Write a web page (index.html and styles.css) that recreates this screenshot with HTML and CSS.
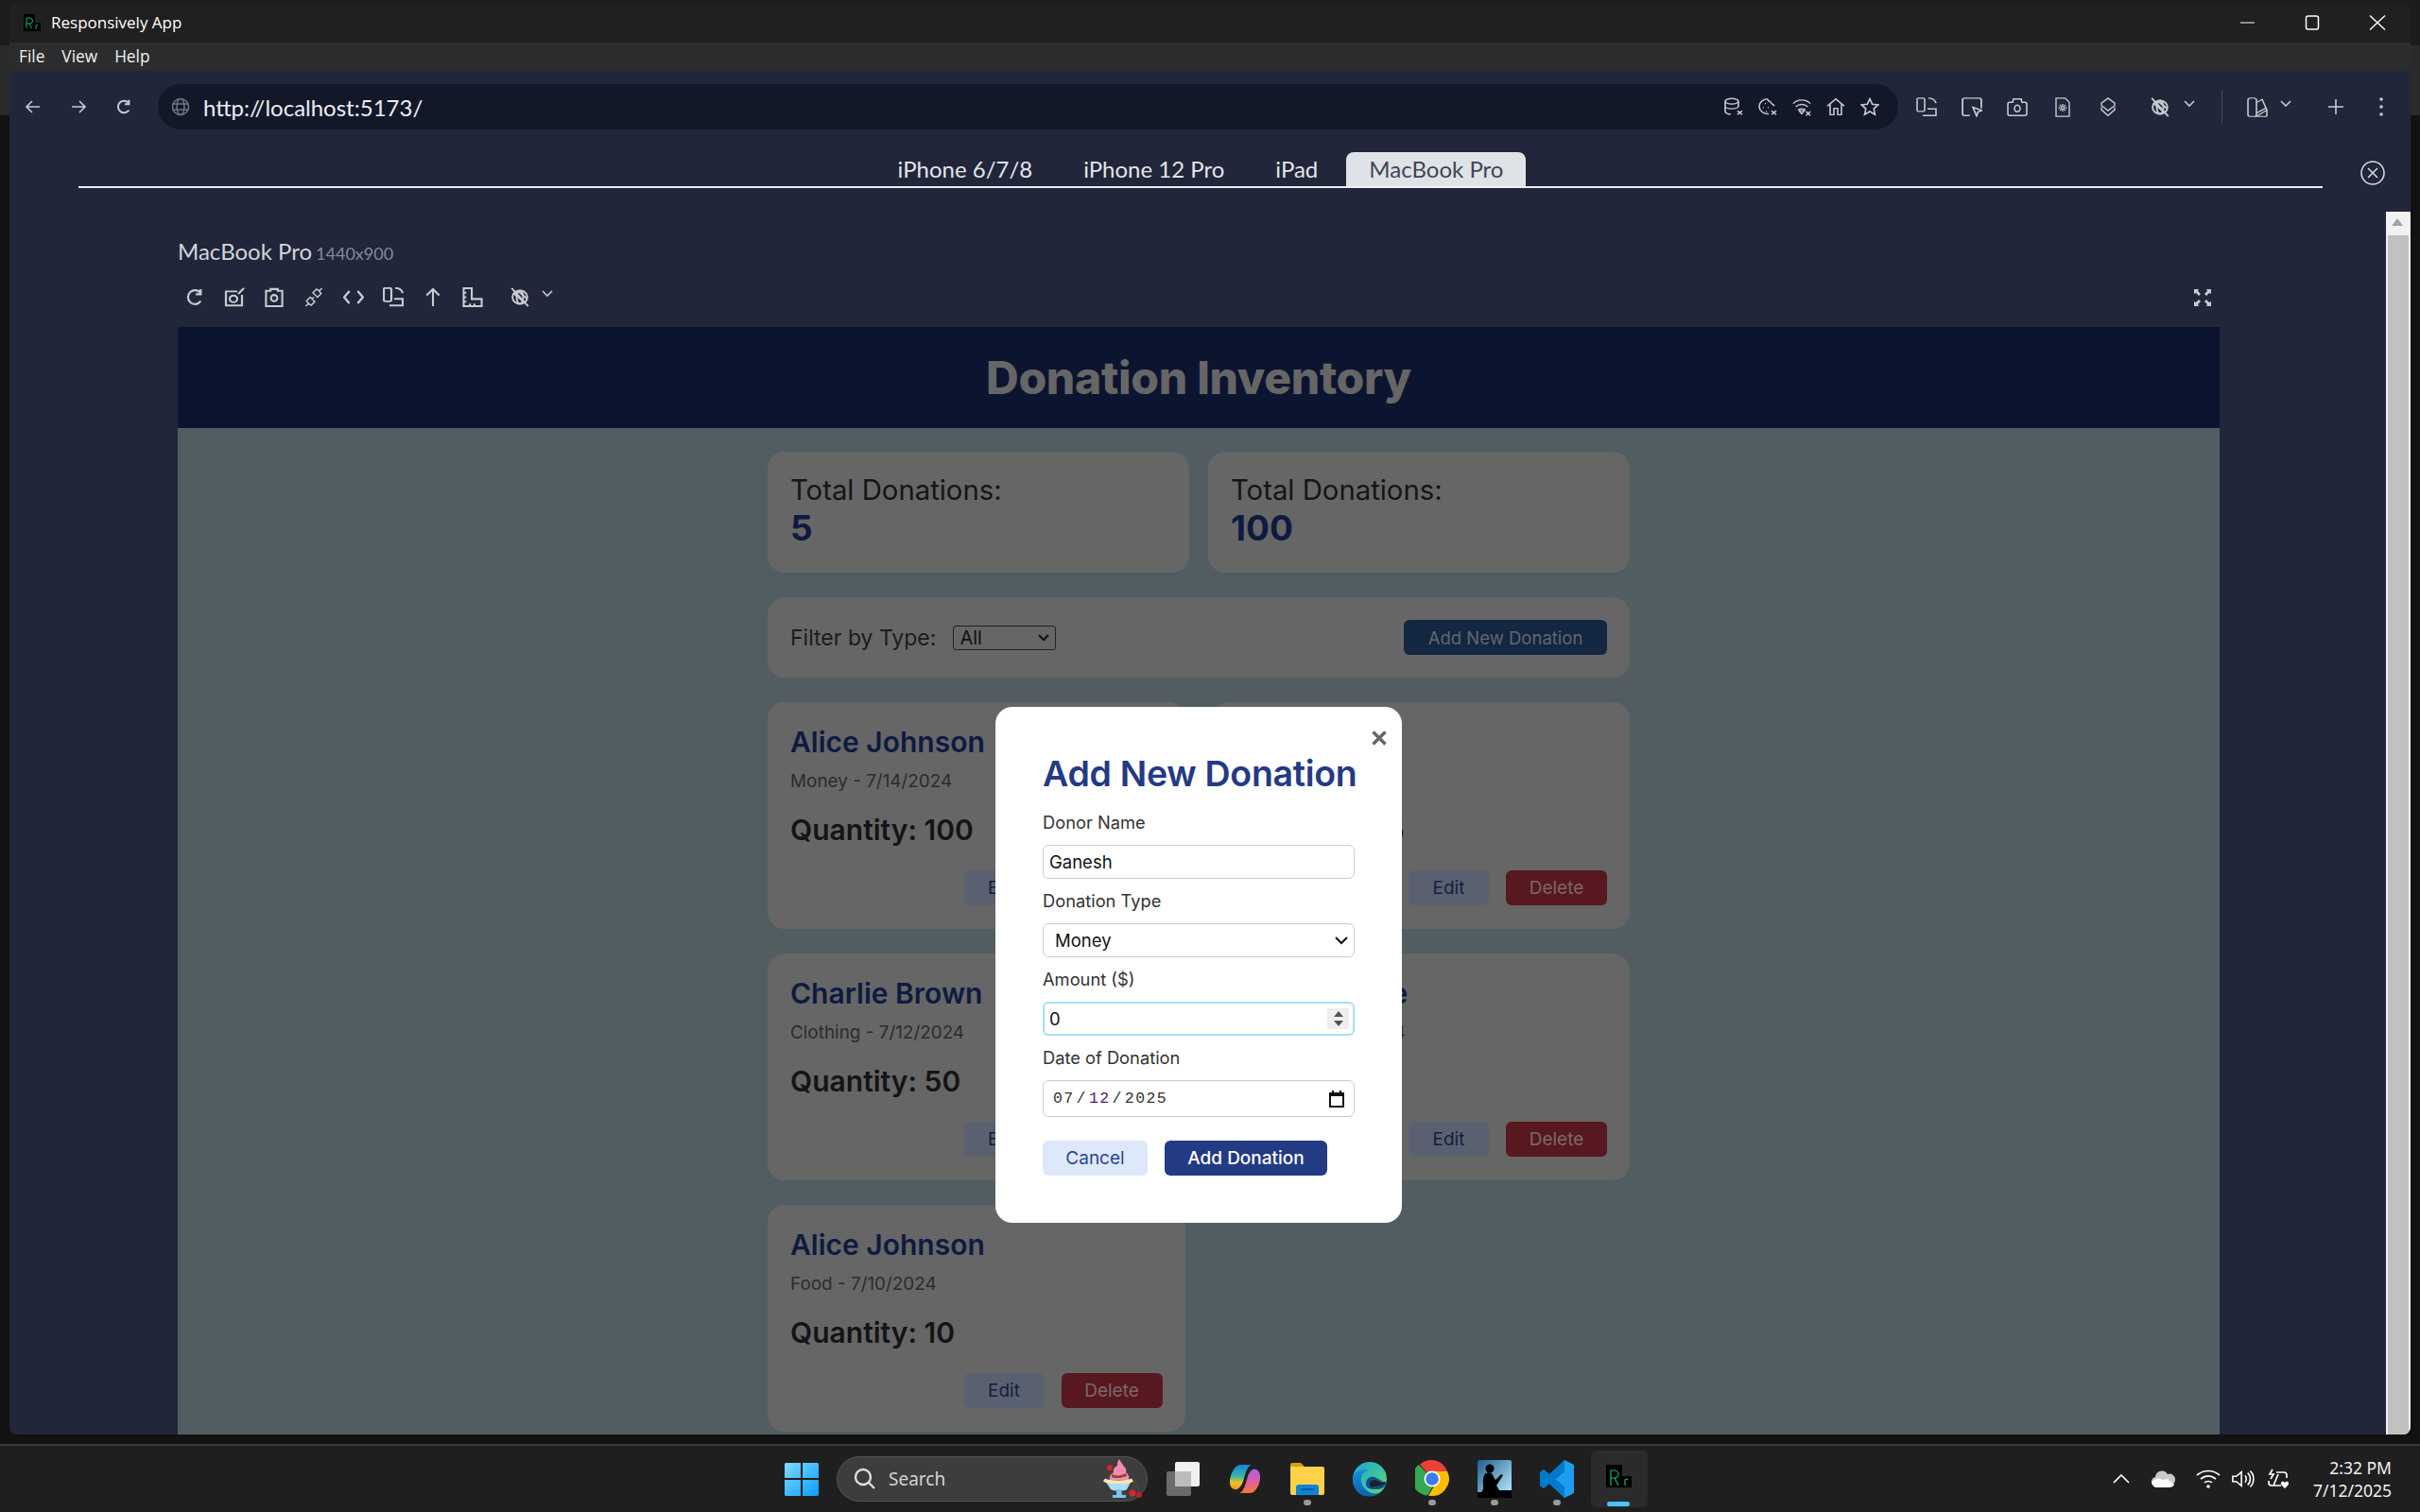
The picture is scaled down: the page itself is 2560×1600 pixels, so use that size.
FILE: index.html
```html
<!DOCTYPE html>
<html lang="en">

<head>
    <meta charset="UTF-8">
    <title>Responsively App</title>
    <link rel="stylesheet" href="styles.css">
</head>

<body>
    <div class="window">
        <div class="titlebar">
            <svg class="app-logo" width="18" height="18" viewBox="0 0 18 18"><rect x="0" y="0" width="12" height="18" fill="#000"/><rect x="11" y="9" width="7" height="9" fill="#000"/><path d="M3 15V4h3.500a2.500 2.500 0 0 1 0 6H3m3 0 2.500 5M13 16v-4l2-.5" fill="none" stroke="#00b98e" stroke-width="1"/></svg>
            <span class="app-name">Responsively App</span>
            <div class="win-controls">
                <svg width="16" height="16" viewBox="0 0 16 16"><path d="M0 8h15" stroke="#fff" stroke-width="1.200"/></svg>
                <svg width="16" height="16" viewBox="0 0 16 16"><rect x="1.500" y="1" width="13" height="14" rx="2" fill="none" stroke="#fff" stroke-width="1.500"/></svg>
                <svg width="18" height="16" viewBox="0 0 18 16"><path d="M1 0.500l16 15M17 0.500 1 15.500" stroke="#fff" stroke-width="1.400"/></svg>
            </div>
        </div>
        <div class="menubar"><span>File</span><span>View</span><span>Help</span></div>

        <div class="toolbar">
            <div class="nav-btns">
                <svg width="18" height="18" viewBox="0 0 18 18" class="ico"><path d="M16 9H2m6-6L2 9l6 6"/></svg>
                <svg width="18" height="18" viewBox="0 0 18 18" class="ico"><path d="M2 9h14m-6-6 6 6-6 6"/></svg>
                <svg width="18" height="18" viewBox="0 0 18 20" class="ico ico-thick"><path d="M15 6a7 7 0 1 0 0 8M15 2v5h-5"/></svg>
            </div>
            <div class="urlbar">
                <svg width="20" height="20" viewBox="0 0 20 20" class="ico ico-dim"><circle cx="10" cy="10" r="8.500"/><ellipse cx="10" cy="10" rx="4" ry="8.500"/><path d="M2 7h16M2 13h16"/></svg>
                <span class="url-text">http://localhost:5173/</span>
                <div class="url-icons">
                    <svg viewBox="0 0 20 24" preserveAspectRatio="none" class="ico"><ellipse cx="8" cy="5" rx="7" ry="3.500"/><path d="M1 5v13c0 2 3 3.500 6 3.500M15 5v6M1 11c0 2 3 3.500 7 3.500s7-1.500 7-3.500M14 17l5 5m0-5-5 5"/></svg>
                    <svg viewBox="0 0 20 24" preserveAspectRatio="none" class="ico"><path d="M10 2a9 9 0 1 0 1 19M10 2c0 3 2 3 3 4 0 2 3 3 4 5M7 8h1M5 13h1M10 13h1M8 18h1M14 17l5 5m0-5-5 5"/></svg>
                    <svg viewBox="0 0 22 24" preserveAspectRatio="none" class="ico"><path d="M1 8c5-6 15-6 20 0M4 12c4-4 10-4 14 0M7 16c2-2 6-2 8 0M11 21l-3-4h6zM16 18l5 5m0-5-5 5"/></svg>
                    <svg viewBox="0 0 20 24" preserveAspectRatio="none" class="ico"><path d="M1 11 10 2l9 9M4 9v13h4v-8h4v8h4V9"/></svg>
                    <svg viewBox="0 0 20 20" class="ico"><path d="m10 1.500 2.600 5.700 6.200.7-4.600 4.200 1.300 6.100L10 15l-5.500 3.200 1.300-6.100L1.200 7.900l6.200-.7z"/></svg>
                </div>
            </div>
            <div class="tool-icons">
                <svg viewBox="0 0 22 24" preserveAspectRatio="none" class="ico"><rect x="1" y="1" width="8" height="16" rx="1.500"/><path d="M13 1c4 0 7 2 8 6M7 22h14v-8h-9"/></svg>
                <svg viewBox="0 0 20 24" preserveAspectRatio="none" class="ico"><path d="M8 22H3a2 2 0 0 1-2-2V3a2 2 0 0 1 2-2h14a2 2 0 0 1 2 2v10"/><path d="m11 12 9 4-4 1.500-1.500 5z"/></svg>
                <svg viewBox="0 0 22 24" preserveAspectRatio="none" class="ico"><path d="M3 6h3l1-4h8l1 4h3a2 2 0 0 1 2 2v12a2 2 0 0 1-2 2H3a2 2 0 0 1-2-2V8a2 2 0 0 1 2-2z"/><ellipse cx="11" cy="13.500" rx="3" ry="4"/></svg>
                <svg viewBox="0 0 18 24" class="ico"><path d="M1 1h11l5 5v17H1zM9 8v2M9 15v2M4 12.500h2M12 12.500h2M5.500 9l1.500 1.500M12.500 9 11 10.500M5.500 16 7 14.500M12.500 16 11 14.500"/><circle cx="9" cy="12.500" r="1.800"/></svg>
                <svg viewBox="0 0 20 24" class="ico"><path d="m10 1 8 6v3l-8 6-8-6V7zM2 12v3l8 7 8-7v-3"/></svg>
                <div class="tool-drop tool-eye">
                    <svg viewBox="0 0 22 24" class="ico ico-thick"><ellipse cx="11" cy="12" rx="9" ry="8"/><ellipse cx="11" cy="12" rx="4" ry="8"/><path d="M1 1l20 22M3 7l13 11M8 4l12 10"/></svg>
                    <svg class="chev" width="12" height="8" viewBox="0 0 12 8"><path d="m1 1 5 5 5-5"/></svg>
                </div>
                <div class="tool-sep"></div>
                <div class="tool-drop tool-theme">
                    <svg viewBox="0 0 22 30" preserveAspectRatio="none" class="ico"><rect x="1" y="1" width="9" height="28" rx="3"/><path d="m10 8 6-5 5 16-11 10h9a2 2 0 0 0 2-2v-8M10 24l10-8"/></svg>
                    <svg class="chev" width="12" height="8" viewBox="0 0 12 8"><path d="m1 1 5 5 5-5"/></svg>
                </div>
                <svg class="ico tool-plus" viewBox="0 0 18 18"><path d="M9 1v16M1 9h16"/></svg>
                <svg class="tool-dots" viewBox="0 0 6 24"><circle cx="3" cy="4" r="1.800"/><circle cx="3" cy="12" r="1.800"/><circle cx="3" cy="20" r="1.800"/></svg>
            </div>
        </div>

        <div class="tabs-row">
            <div class="tabs">
                <span class="tab">iPhone 6/7/8</span>
                <span class="tab">iPhone 12 Pro</span>
                <span class="tab">iPad</span>
                <span class="tab active">MacBook Pro</span>
            </div>
            <svg class="tabs-close" width="26" height="26" viewBox="0 0 26 26"><circle cx="13" cy="13" r="12"/><path d="m8 8 10 10M18 8 8 18"/></svg>
        </div>

        <div class="workspace">
            <div class="device">
                <div class="device-label">MacBook Pro<small>1440x900</small></div>
                <div class="device-tools">
                    <svg viewBox="0 0 18 20" class="ico ico-thick"><path d="M15 6a7 7 0 1 0 0 8M15 2v5h-5"/></svg>
                    <svg viewBox="0 0 22 24" preserveAspectRatio="none" class="ico ico-thick"><path d="M14 5H2v17h17V9"/><circle cx="10" cy="14" r="4"/><path d="m15 8 6-7"/></svg>
                    <svg viewBox="0 0 20 22" class="ico ico-thick"><path d="M6 4V2h8v2h5v17H1V4z"/><circle cx="10" cy="12" r="3.500"/></svg>
                    <svg viewBox="0 0 20 22" class="ico"><path d="m1 21 3-3M19 1l-3 3M4 18l-2-3 4-4 5 5-4 4zM16 4l2 3-4 4-5-5 4-4zM8 13l2-2"/></svg>
                    <svg viewBox="0 0 20 14" class="ico ico-thick"><path d="M6 1 1 7l5 6M14 1l5 6-5 6"/></svg>
                    <svg viewBox="0 0 22 24" preserveAspectRatio="none" class="ico ico-thick"><rect x="1" y="1" width="8" height="16" rx="1.500"/><path d="M13 1c4 0 7 2 8 6M7 22h14v-8h-9"/></svg>
                    <svg viewBox="0 0 16 22" class="ico ico-thick"><path d="M8 21V2M1 9l7-7 7 7"/></svg>
                    <svg viewBox="0 0 22 22" class="ico ico-thick"><path d="M1 1h9v12h11v8H1zM1 6h3M1 11h3M1 16h3M8 18v3M13 18v3"/></svg>
                    <div class="tool-drop tool-eye">
                        <svg viewBox="0 0 22 24" class="ico ico-thick"><ellipse cx="11" cy="12" rx="9" ry="8"/><ellipse cx="11" cy="12" rx="4" ry="8"/><path d="M1 1l20 22M3 7l13 11M8 4l12 10"/></svg>
                        <svg class="chev" width="12" height="8" viewBox="0 0 12 8"><path d="m1 1 5 5 5-5"/></svg>
                    </div>
                    <svg class="device-min" viewBox="0 0 20 20"><path d="M1 1h5l-1 2 3 3-2 2-3-3-2 1zM19 1h-5l1 2-3 3 2 2 3-3 2 1zM1 19h5l-1-2 3-3-2-2-3 3-2-1zM19 19h-5l1-2-3-3 2-2 3 3 2-1z"/></svg>
                </div>

                <div class="viewport">
                    <div class="page">
                        <header class="page-header">
                            <h1>Donation Inventory</h1>
                        </header>
                        <main class="container">
                            <section class="stats">
                                <div class="stat-card">
                                    <div class="stat-label">Total Donations:</div>
                                    <div class="stat-value">5</div>
                                </div>
                                <div class="stat-card">
                                    <div class="stat-label">Total Donations:</div>
                                    <div class="stat-value">100</div>
                                </div>
                            </section>
                            <section class="filter-bar">
                                <label class="filter-label">Filter by Type:</label>
                                <div class="filter-select">All
                                    <svg width="12" height="8" viewBox="0 0 12 8"><path d="m1 1 5 5 5-5"/></svg>
                                </div>
                                <button class="btn-new">Add New Donation</button>
                            </section>
                            <section class="donations">
                                <article class="donation">
                                    <h3>Alice Johnson</h3>
                                    <p class="meta">Money - 7/14/2024</p>
                                    <p class="qty">Quantity: 100</p>
                                    <div class="actions"><button class="btn-edit">Edit</button><button class="btn-delete">Delete</button></div>
                                </article>
                                <article class="donation">
                                    <h3>Bob Smith</h3>
                                    <p class="meta">Food - 7/13/2024</p>
                                    <p class="qty">Quantity: 25</p>
                                    <div class="actions"><button class="btn-edit">Edit</button><button class="btn-delete">Delete</button></div>
                                </article>
                                <article class="donation">
                                    <h3>Charlie Brown</h3>
                                    <p class="meta">Clothing - 7/12/2024</p>
                                    <p class="qty">Quantity: 50</p>
                                    <div class="actions"><button class="btn-edit">Edit</button><button class="btn-delete">Delete</button></div>
                                </article>
                                <article class="donation">
                                    <h3>Diana Prince</h3>
                                    <p class="meta">Clothing - 7/11/2024</p>
                                    <p class="qty">Quantity: 75</p>
                                    <div class="actions"><button class="btn-edit">Edit</button><button class="btn-delete">Delete</button></div>
                                </article>
                                <article class="donation">
                                    <h3>Alice Johnson</h3>
                                    <p class="meta">Food - 7/10/2024</p>
                                    <p class="qty">Quantity: 10</p>
                                    <div class="actions"><button class="btn-edit">Edit</button><button class="btn-delete">Delete</button></div>
                                </article>
                            </section>
                        </main>

                        <div class="modal-wrap">
                            <form class="modal">
                                <svg class="modal-close" width="16" height="16" viewBox="0 0 16 16"><path d="m1.500 1.500 13 13M14.500 1.500l-13 13"/></svg>
                                <h2>Add New Donation</h2>
                                <label>Donor Name</label>
                                <div class="field">Ganesh</div>
                                <label>Donation Type</label>
                                <div class="field field-select">Money
                                    <svg width="14" height="9" viewBox="0 0 14 9"><path d="m1 1 6 6 6-6"/></svg>
                                </div>
                                <label>Amount ($)</label>
                                <div class="field field-focus">0
                                    <span class="spinner">
                                        <svg width="12" height="16" viewBox="0 0 12 16"><path d="M6 0l5 6H1zM6 16l-5-6h10z"/></svg>
                                    </span>
                                </div>
                                <label>Date of Donation</label>
                                <div class="field field-date">
                                    <span>07</span><i>/</i><span class="date-mid">12</span><i>/</i><span>2025</span>
                                    <svg width="16" height="18" viewBox="0 0 16 18"><path d="M1 3h14v14H1zM4 0v3M12 0v3" fill="none" stroke="#111" stroke-width="2"/><path d="M1 3h14v3H1z" fill="#111"/></svg>
                                </div>
                                <div class="modal-actions">
                                    <button type="button" class="btn-cancel">Cancel</button>
                                    <button type="button" class="btn-submit">Add Donation</button>
                                </div>
                            </form>
                        </div>
                    </div>
                </div>
            </div>
            <div class="scrollbar">
                <div class="scroll-up"></div>
                <div class="scroll-thumb"></div>
            </div>
        </div>
    </div>

    <div class="taskbar">
        <div class="task-center">
            <svg class="start" width="36" height="36" viewBox="0 0 36 36">
                <defs><linearGradient id="win" x1="0" y1="0" x2="1" y2="1"><stop offset="0" stop-color="#7fdcff"/><stop offset="1" stop-color="#0a9bff"/></linearGradient></defs>
                <path d="M1 1h16v16H0V2zM19 1h16l1 1v15H19zM0 19h17v17H1l-1-1zM19 19h17v16l-1 1H19z" fill="url(#win)"/>
            </svg>
            <div class="search-box">
                <svg width="24" height="24" viewBox="0 0 24 24" class="search-ico"><circle cx="10" cy="10" r="8"/><path d="m16 16 6 6"/></svg>
                <span>Search</span>
                <svg class="sundae" width="46" height="46" viewBox="0 0 46 46">
                    <path d="M11 24c-1-5 2-6 4-8-1-4 2-6 4-7 0-2 0-5 2-7 1 3 4 5 5 8 2 1 3 4 2 6 3 2 4 5 3 8z" fill="#f28ab2"/>
                    <path d="M13 18c4 2 10 2 15-1l1 3c-5 2-12 3-16 1z" fill="#8b4a2b"/>
                    <circle cx="11" cy="11" r="3" fill="#d8262f"/>
                    <path d="M6 25h28l-5 9c-2 2-14 2-17 0z" fill="#a9dcf5"/>
                    <path d="M5 24c4 3 26 3 30 0" stroke="#fbe6b0" stroke-width="3.500" fill="none"/>
                    <path d="M18 34h5l1 6h4v3H14v-3h4z" fill="#7fc3ea"/>
                    <circle cx="35" cy="38" r="3.500" fill="#d8262f"/>
                    <circle cx="42" cy="40" r="3" fill="#c1202a"/>
                    <path d="M35 35c0-4 1-7 3-10 1 4 3 8 4 12" stroke="#7a3b2a" stroke-width="1" fill="none"/>
                </svg>
            </div>
            <div class="task-app">
                <svg width="38" height="38" viewBox="0 0 38 38">
                    <rect x="2" y="11" width="26" height="26" rx="2" fill="#6b6b6b"/>
                    <rect x="11" y="1" width="26" height="26" rx="2" fill="#f1f1f1"/>
                    <path d="M11 11h17v16H11z" fill="#bdbdbd"/>
                </svg>
            </div>
            <div class="task-app">
                <svg width="34" height="36" viewBox="0 0 36 36">
                    <defs>
                        <linearGradient id="cop1" x1="0" y1="0" x2="0" y2="1"><stop offset="0" stop-color="#1480e0"/><stop offset=".45" stop-color="#35b8a8"/><stop offset=".75" stop-color="#f7c21c"/><stop offset="1" stop-color="#f08a24"/></linearGradient>
                        <linearGradient id="cop2" x1="0" y1="0" x2="0" y2="1"><stop offset="0" stop-color="#a85fe8"/><stop offset=".55" stop-color="#e25fa0"/><stop offset="1" stop-color="#f7782c"/></linearGradient>
                    </defs>
                    <path d="M24 34H12c4-2 6-8 8-15s4-11 8-12c5 0 7 4 7 9 0 8-5 18-11 18z" fill="url(#cop2)"/>
                    <path d="M12 2h13c-4 2-6 8-8 15-2 8-5 12-9 13-5 0-7-4-7-9C1 14 6 3 12 2z" fill="url(#cop1)"/>
                </svg>
            </div>
            <div class="task-app has-dot">
                <svg width="36" height="36" viewBox="0 0 36 36">
                    <path d="M0 3a2 2 0 0 1 2-2h9l4 4H0z" fill="#d6a10e"/>
                    <path d="M0 5h34a2 2 0 0 1 2 2v26a2 2 0 0 1-2 2H2a2 2 0 0 1-2-2z" fill="#fdd249"/>
                    <path d="M6 35V27a3 3 0 0 1 3-3h18a3 3 0 0 1 3 3v8z" fill="#0f84d4"/>
                    <path d="M11 29h14" stroke="#0b5a9c" stroke-width="2"/>
                </svg>
            </div>
            <div class="task-app">
                <svg width="36" height="40" viewBox="0 0 36 36">
                    <defs>
                        <linearGradient id="edge1" x1="0" y1="0" x2="1" y2="1"><stop offset="0" stop-color="#1aa5d9"/><stop offset="1" stop-color="#5fdc6a"/></linearGradient>
                        <linearGradient id="edge2" x1="0" y1="0" x2="0" y2="1"><stop offset="0" stop-color="#1491dc"/><stop offset="1" stop-color="#0e62ad"/></linearGradient>
                    </defs>
                    <circle cx="18" cy="18" r="18" fill="url(#edge1)"/>
                    <path d="M0 18C1 9 10 6 18 9c-8 0-11 8-8 15 3 7 13 13 20 7-5 6-12 6-18 5C5 34 0 27 0 18z" fill="url(#edge2)"/>
                    <path d="M14 23c0-6 6-9 11-6 5 2 6 5 11 4-1 5-5 8-10 8-6 0-12 0-12-6z" fill="#0d4f96"/>
                    <path d="M18 24c0-4 5-6 8-4 2 1 4 3 9 1l-1 2c-4 3-7 2-10 3-3 1-6 1-6-2z" fill="#1f1f1f"/>
                </svg>
            </div>
            <div class="task-app has-dot">
                <svg width="36" height="40" viewBox="0 0 36 36">
                    <path d="M18 18 5 2.500A18 18 0 0 1 34 10H18z" fill="#ea4335"/>
                    <path d="M18 18 4 3A18 18 0 0 0 13 35.500l8-13z" fill="#34a853"/>
                    <path d="M18 10h16A18 18 0 0 1 14 35.500l8-13z" fill="#fbbc05"/>
                    <circle cx="18" cy="18" r="8.500" fill="#fff"/>
                    <circle cx="18" cy="18" r="6.800" fill="#3b7de8"/>
                </svg>
            </div>
            <div class="task-app has-dot">
                <svg width="36" height="40" viewBox="0 0 36 40">
                    <defs><linearGradient id="kin" x1="0" y1="0" x2="1" y2="1"><stop offset="0" stop-color="#1d5f91"/><stop offset="1" stop-color="#c2f2ff"/></linearGradient></defs>
                    <rect width="36" height="40" rx="2" fill="url(#kin)"/>
                    <circle cx="13" cy="9" r="4.500" fill="#000"/>
                    <path d="M9 14c4-2 7 0 8 4l2 3 6-6 2 1-7 11 3 5H36v8H0v-6h4c4-4 1-8 2-13 0-3 1-6 3-7z" fill="#000"/>
                </svg>
            </div>
            <div class="task-app has-dot">
                <svg width="36" height="40" viewBox="0 0 36 40">
                    <path d="M26 0 36 5v30l-10 5-16-15 16-13z" fill="#1f9cf0"/>
                    <path d="M26 0v12L10 25l-6 5-4-3 8-7-8-7 4-3 6 5z" fill="#0065a9"/>
                    <path d="M26 0 10 15 4 10 0 13v14l4 3 6-5 16 15V28L16 20 26 12z" fill="#007acc"/>
                </svg>
            </div>
            <div class="task-app task-active">
                <svg width="28" height="30" viewBox="0 0 28 30"><rect x="0" y="0" width="17" height="24" fill="#000"/><rect x="17" y="12" width="10" height="12" fill="#000"/><path d="M5 22V6h4a4 4 0 0 1 0 8H5m4 0 4 8M20 22v-6l3-1" fill="none" stroke="#00b98e" stroke-width="1.200"/></svg>
            </div>
        </div>
        <div class="tray">
            <svg width="18" height="10" viewBox="0 0 18 10" class="tray-ico"><path d="m1 9 8-8 8 8"/></svg>
            <svg width="26" height="18" viewBox="0 0 26 18"><path d="M5 7a7 7 0 0 1 13-3 6 6 0 0 1 7 9c-1 3-3 4-5 4H6c-6 0-7-9-1-10z" fill="#c9c9c9"/><path d="M1 13c3-4 8-6 11-3l6-1 7 6c-1 2-3 3-5 3H6c-2 0-4-2-5-5z" fill="#fff"/></svg>
            <svg width="26" height="20" viewBox="0 0 26 20" class="tray-ico"><path d="M1 6c7-6 17-6 24 0M5 10c5-4 11-4 16 0M9 14c2-2 6-2 8 0"/><circle cx="13" cy="18" r="1.800" fill="#fff" stroke="none"/></svg>
            <svg class="tray-tight tray-ico" width="24" height="20" viewBox="0 0 26 20"><path d="M1 7v6h4l6 5V2L5 7zM15 6c2 2 2 6 0 8M18 3c4 3 4 11 0 14M21 1c5 4 5 14 0 18"/></svg>
            <svg class="tray-tight tray-ico" width="26" height="26" viewBox="0 0 26 26"><path d="M7 3 4 8h4l-3 5M11 6h8a3 3 0 0 1 3 3v3M3 15v2a3 3 0 0 0 3 3h10M8 20l5-12"/><path d="M17 20c-3-3 1-6 3-3 2-3 6 0 3 3l-3 3z" fill="#fff" stroke="none"/></svg>
            <div class="clock">2:32 PM<br>7/12/2025</div>
        </div>
    </div>
</body>

</html>
```

FILE: styles.css
```css
* {
    box-sizing: border-box;
}

html,
body {
    margin: 0;
    height: 1600px;
    overflow: hidden;
}

body {
    width: 2560px;
    background: linear-gradient(#1c1c1c 0 48px, #2a2a2b 48px 122px, #121212 122px);
    font-family: "Lato", sans-serif;
    display: flex;
    flex-direction: column;
}

svg {
    flex: none;
    display: block;
}

.ico {
    fill: none;
    stroke: #c8cad0;
    stroke-width: 1.6;
}

.ico-thick {
    stroke-width: 2.2;
}

.ico-dim {
    stroke: #6d7280;
}

/* window */

.window {
    margin: 2px 10px 0;
    height: 1516px;
    border-radius: 10px 10px 8px 8px;
    background: #21263a;
    overflow: hidden;
    display: flex;
    flex-direction: column;
}

.titlebar {
    height: 43px;
    background: #202020;
    display: flex;
    align-items: center;
    padding-left: 15px;
    color: #fff;
    font-family: "Open Sans", sans-serif;
    font-size: 17px;
}

.app-name {
    margin-left: 11px;
}

.win-controls {
    margin-left: auto;
    display: flex;
    align-items: center;
    gap: 52px;
    padding-right: 26px;
}

.menubar {
    height: 30px;
    padding: 0 0 2px 10px;
    background: #2b2c2e;
    color: #f1f1f1;
    font-family: "Open Sans", sans-serif;
    font-size: 17.3px;
    display: flex;
    align-items: center;
    gap: 18px;
}

/* address bar */

.toolbar {
    height: 62px;
    display: flex;
    align-items: center;
    padding-top: 14px;
}

.nav-btns {
    width: 157px;
    display: flex;
    align-items: center;
    gap: 30px;
    padding-left: 16px;
}

.urlbar {
    width: 1841px;
    height: 48px;
    background: #131829;
    border-radius: 24px;
    display: flex;
    align-items: center;
    padding: 0 20px 0 14px;
}

.url-text {
    margin-left: 14px;
    font-size: 24px;
    color: #eceef2;
}

.url-icons {
    margin-left: auto;
    display: flex;
    align-items: center;
    gap: 16px;
}

.url-icons svg {
    width: 20px;
    height: 20px;
}

.tool-icons {
    flex: 1;
    display: flex;
    align-items: center;
    gap: 26px;
    padding-left: 19px;
}

.tool-icons svg {
    width: 22px;
    height: 21px;
}

.tool-drop {
    display: flex;
    align-items: flex-start;
    gap: 14px;
}

.tool-eye {
    margin-left: 7px;
}

.tool-theme {
    gap: 13px;
}

.tool-drop .chev {
    width: 12px;
    height: 8px;
    margin-top: 3px;
    fill: none;
    stroke: #c8cad0;
    stroke-width: 1.6;
}

.tool-sep {
    width: 1px;
    height: 36px;
    margin-left: 2px;
    background: #474c5e;
}

.tool-icons .tool-plus {
    width: 18px;
    height: 18px;
    margin-left: 12px;
}

.tool-icons .tool-dots {
    width: 6px;
    height: 24px;
    margin-left: 10px;
    fill: #c8cad0;
}

/* device tabs */

.tabs-row {
    height: 62px;
    display: flex;
    align-items: flex-start;
    padding: 24px 0 0 73px;
}

.tabs {
    width: 2374px;
    height: 38px;
    display: flex;
    justify-content: center;
    gap: 6px;
    border-bottom: 2px solid #eef0f3;
}

.tab {
    height: 36px;
    padding: 0 24px;
    border-radius: 8px 8px 0 0;
    font-size: 24px;
    line-height: 36px;
    color: #e2e5ea;
}

.tab.active {
    background: #dfe2e7;
    color: #3f4653;
}

.tabs-close {
    margin: 9px 0 0 40px;
    fill: none;
    stroke: #d5d7dc;
    stroke-width: 1.6;
}

/* device preview */

.workspace {
    flex: 1;
    min-height: 0;
    display: flex;
}

.device {
    width: 2514px;
    padding: 49px 0 0 178px;
}

.device-label {
    height: 36px;
    font-size: 24px;
    line-height: 36px;
    color: #d3d5da;
}

.device-label small {
    margin-left: 4px;
    font-size: 18px;
    color: #858994;
}

.device-tools {
    width: 2160px;
    height: 47px;
    margin-top: 7px;
    display: flex;
    align-items: center;
    gap: 20px;
    padding-left: 7px;
}

.device-tools svg {
    width: 22px;
    height: 21px;
}

.device-tools .tool-eye {
    margin-left: 8px;
    gap: 12px;
}

.device-tools .chev {
    width: 12px;
    height: 8px;
}

.device-tools .device-min {
    width: 20px;
    height: 20px;
    margin-left: auto;
    margin-right: 8px;
    fill: #c8cad0;
}

.viewport {
    width: 2160px;
    height: 1173px;
    margin-top: 8px;
    overflow: hidden;
}

.page {
    position: relative;
    height: 1350px;
    background: #525d62;
    font-family: "Inter", sans-serif;
}

.page-header {
    height: 107px;
    background: #0c1530;
    display: flex;
    align-items: center;
    justify-content: center;
}

.page-header h1 {
    margin: 0;
    font-size: 48px;
    font-weight: 800;
    letter-spacing: -0.3px;
    color: #666;
}

.container {
    width: 912px;
    margin: 0 auto;
    padding-top: 25px;
}

.stats {
    display: grid;
    grid-template-columns: 1fr 1fr;
    gap: 20px;
}

.stat-card {
    height: 128px;
    padding: 24px 24px 0;
    background: #666;
    border-radius: 18px;
}

.stat-label {
    font-size: 29.3px;
    line-height: 34px;
    color: #151515;
}

.stat-value {
    font-size: 37px;
    line-height: 46px;
    font-weight: 700;
    color: #0e1a40;
}

.filter-bar {
    height: 85px;
    margin-top: 26px;
    padding: 0 24px;
    background: #666;
    border-radius: 18px;
    display: flex;
    align-items: center;
}

.filter-label {
    font-size: 23px;
    color: #1c1c1c;
}

.filter-select {
    width: 109px;
    height: 26px;
    margin-left: 18px;
    padding: 0 6px;
    border: 1px solid #222;
    border-radius: 3px;
    font-size: 20px;
    line-height: 24px;
    color: #111;
    display: flex;
    align-items: center;
    justify-content: space-between;
}

.filter-select svg,
.field-select svg {
    fill: none;
    stroke: #111;
    stroke-width: 2;
}

button {
    border: 0;
    border-radius: 6px;
    padding: 0;
    font-family: inherit;
}

.btn-new {
    width: 215px;
    height: 37px;
    margin-left: auto;
    background: #132642;
    font-size: 18.5px;
    color: #5f6872;
}

.donations {
    margin-top: 26px;
    display: grid;
    grid-template-columns: 1fr 1fr;
    gap: 26px 29px;
}

.donation {
    height: 240px;
    padding: 24px 24px 0;
    background: #666;
    border-radius: 18px;
}

.donation h3 {
    margin: 0;
    height: 36px;
    font-size: 30px;
    line-height: 36px;
    font-weight: 600;
    color: #0e1a40;
}

.meta {
    margin: 12px 0 0;
    height: 24px;
    font-size: 18.9px;
    line-height: 24px;
    color: #2c2c2c;
}

.qty {
    margin: 21px 0 0;
    height: 36px;
    font-size: 30px;
    line-height: 36px;
    font-weight: 600;
    color: #141414;
}

.actions {
    margin-top: 25px;
    display: flex;
    justify-content: flex-end;
    gap: 18px;
}

.btn-edit {
    width: 85px;
    height: 37px;
    background: #596170;
    font-size: 19px;
    color: #141e3f;
}

.btn-delete {
    width: 107px;
    height: 37px;
    background: #581820;
    font-size: 19px;
    color: #78686a;
}

/* modal */

.modal-wrap {
    position: absolute;
    inset: 0;
    display: flex;
    align-items: center;
    justify-content: center;
}

.modal {
    position: relative;
    width: 430px;
    height: 546px;
    padding: 48px 50px 0;
    background: #fff;
    border-radius: 18px;
    display: flex;
    flex-direction: column;
    font-size: 19px;
}

.modal-close {
    position: absolute;
    top: 25px;
    right: 16px;
    stroke: #666;
    stroke-width: 3.4;
}

.modal h2 {
    margin: 0 0 16px;
    height: 46px;
    font-size: 37.5px;
    line-height: 46px;
    font-weight: 600;
    letter-spacing: -0.3px;
    color: #233a85;
    white-space: nowrap;
}

.modal label {
    height: 24px;
    font-size: 18.3px;
    line-height: 24px;
    color: #333;
}

.field {
    height: 36px;
    margin: 12px 0 11px;
    padding: 0 6px;
    border: 1px solid #ccc;
    border-radius: 6px;
    font-size: 18.5px;
    color: #111;
    display: flex;
    align-items: center;
    justify-content: space-between;
}

.field-select {
    padding: 0 6px 0 12px;
}

.field-focus {
    padding: 0 4px 0 5px;
    border: 2px solid #a5e1f0;
}

.spinner {
    width: 23px;
    height: 22px;
    background: #eee;
    display: flex;
    align-items: center;
    justify-content: center;
    fill: #555;
}

.field-date {
    height: 39px;
    padding: 0 10px 0 10px;
    justify-content: flex-start;
    font-family: "Liberation Mono", monospace;
    font-size: 16.5px;
    color: #333;
    letter-spacing: 1.4px;
}

.field-date i {
    margin: 0 2px;
    font-style: normal;
}

.field-date .date-mid {
    color: #551a6b;
}

.field-date svg {
    margin-left: auto;
}

.modal-actions {
    margin-top: 14px;
    display: flex;
    gap: 18px;
}

.btn-cancel {
    width: 111px;
    height: 37px;
    background: #dde8fb;
    font-size: 19px;
    color: #2b4690;
}

.btn-submit {
    width: 172px;
    height: 37px;
    background: #233a85;
    font-size: 19px;
    font-weight: 500;
    color: #fff;
}

/* scrollbar */

.scrollbar {
    width: 26px;
    margin: 25px 0 0;
    background: #f1f1f1;
}

.scroll-up {
    height: 25px;
    position: relative;
}

.scroll-up::after {
    content: "";
    position: absolute;
    top: 7px;
    left: 6px;
    border: 6px solid transparent;
    border-top: 0;
    border-bottom: 8px solid #a3a3a3;
}

.scroll-thumb {
    height: 1300px;
    margin: 0 2px;
    background: #c1c1c1;
}

/* taskbar */

.taskbar {
    height: 72px;
    margin-top: 10px;
    border-top: 2px solid #3a3a3a;
    background: #1f1f1f;
    display: flex;
    align-items: center;
    font-family: "Noto Sans", sans-serif;
    color: #fff;
}

.task-center {
    display: flex;
    align-items: center;
    padding-left: 830px;
}

.search-box {
    width: 329px;
    height: 48px;
    margin-left: 19px;
    padding: 0 4px 0 17px;
    background: #3d3d3d;
    border: 1px solid #535353;
    border-radius: 24px;
    display: flex;
    align-items: center;
    font-size: 19px;
    color: #d4d4d4;
}

.search-box span {
    margin-left: 13px;
}

.search-ico {
    fill: none;
    stroke: #dcdcdc;
    stroke-width: 2.4;
}

.sundae {
    margin-left: auto;
}

.task-app {
    position: relative;
    width: 66px;
    height: 60px;
    display: flex;
    align-items: center;
    justify-content: center;
}

.search-box + .task-app {
    margin-left: 4px;
}

.has-dot::after {
    content: "";
    position: absolute;
    bottom: 2px;
    left: 29px;
    width: 8px;
    height: 6px;
    border-radius: 3px;
    background: #9a9a9a;
}

.task-active {
    width: 60px;
    margin-left: 3px;
    background: #2b2b2b;
    border-radius: 6px;
}

.task-active::after {
    content: "";
    position: absolute;
    bottom: 1px;
    left: 17px;
    width: 24px;
    height: 5px;
    border-radius: 3px;
    background: #4cc2ff;
}

.tray {
    margin-left: auto;
    padding-right: 30px;
    display: flex;
    align-items: center;
    gap: 22px;
}

.tray-tight {
    margin-left: -10px;
}

.tray-ico {
    fill: none;
    stroke: #fff;
    stroke-width: 1.7;
}

.clock {
    margin-left: 2px;
    font-size: 17.5px;
    line-height: 24px;
    text-align: right;
    color: #f2f2f2;
}
```
